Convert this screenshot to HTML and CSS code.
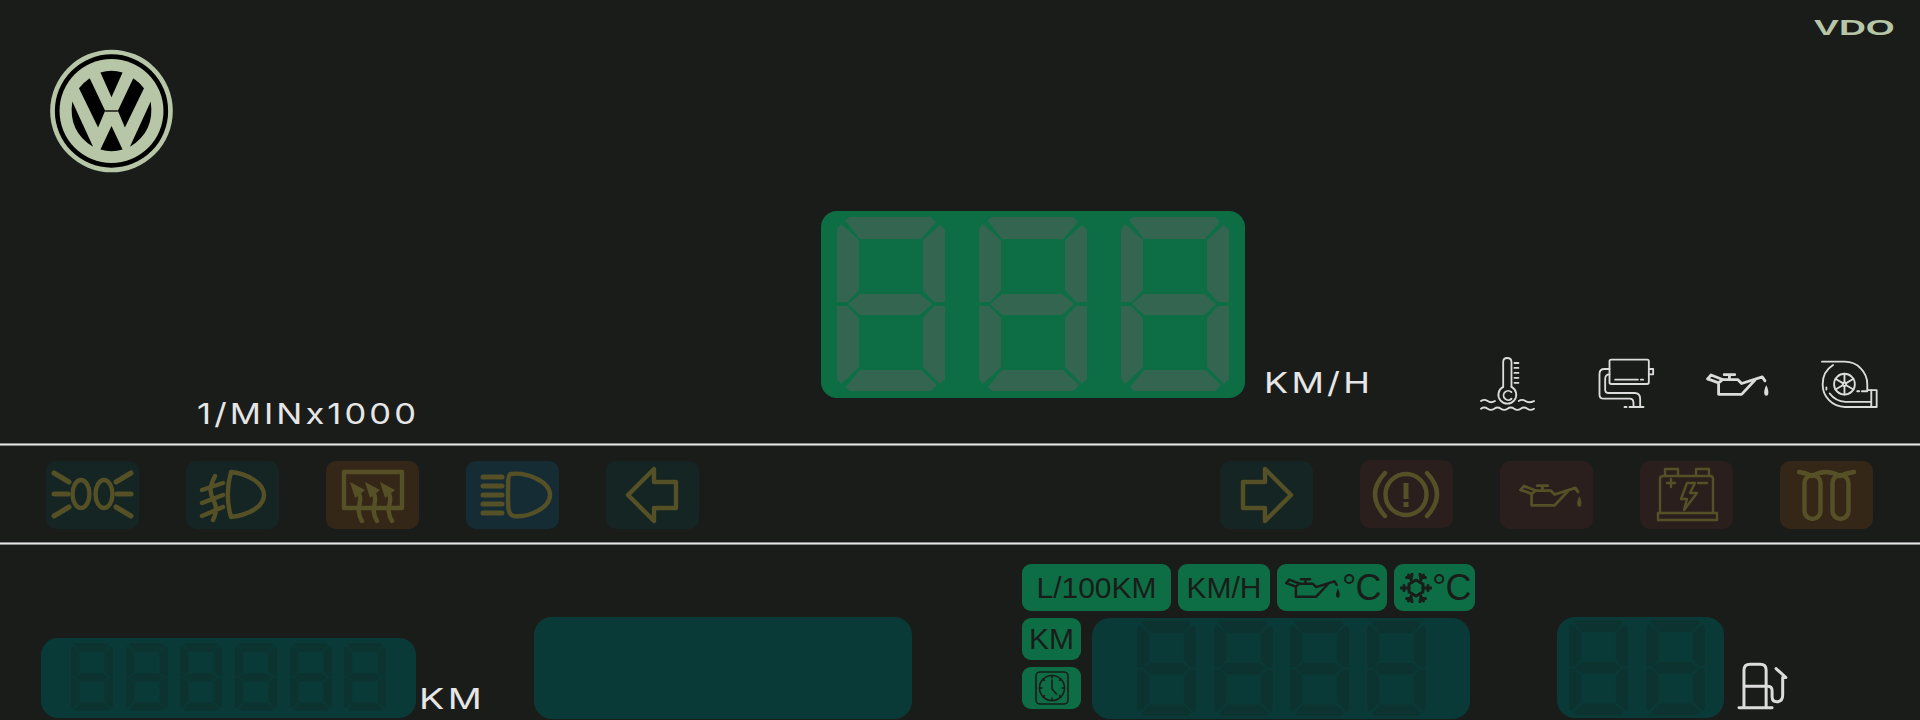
FILE: index.html
```html
<!DOCTYPE html>
<html lang="en">
<head>
<meta charset="utf-8">
<title>Instrument cluster</title>
<link rel="stylesheet" href="styles.css">
</head>
<body>
<svg class="defs" width="0" height="0" aria-hidden="true">
  <defs>
    <symbol id="digit" viewBox="0 0 108 174">
      <polygon points="8,3 13,0 94,0 99,5 84,22 23,22"/>
      <polygon points="0,12 4,7 22,23 22,73 11,85 0,85"/>
      <polygon points="86,23 103,8 108,13 108,85 97,85 86,73"/>
      <polygon points="11,87 23,77 83,77 95,87 83,98 23,98"/>
      <polygon points="0,89 10,89 22,101 22,150 4,167 0,162"/>
      <polygon points="86,101 97,89 108,89 108,162 103,167 86,150"/>
      <polygon points="9,170 23,153 84,153 100,168 94,174 13,174"/>
    </symbol>
    <symbol id="oil" viewBox="795 95 198 76">
      <path class="ln" d="M802,116 L812,104 L847,118 L893,118 L905,130 L968,110 L976,122"/>
      <path class="ln" d="M802,116 L835,128 L847,118 M835,128 L835,163 L905,163 L945,120"/>
      <path class="ln" d="M852,103 H884 M868,104 V116"/>
      <path class="fl" d="M980,135 C972,150 971,167 980,167 C989,167 988,150 980,135 Z"/>
    </symbol>
  </defs>
</svg>
<main class="cluster">
  <section class="top">
    <div class="top-left">
      <svg class="vw" viewBox="152 148 366 370">
        <circle class="vw-a" cx="335" cy="333" r="183"/>
        <circle class="vw-b" cx="335" cy="333" r="169"/>
        <circle class="vw-a" cx="335" cy="333" r="155"/>
        <path class="vw-b" d="M302,218 Q335,208 368,218 L335,292 Z"/>
        <path class="vw-b" d="M238,265 Q252,247 270,235 L316,332 L295,382 Z"/>
        <path class="vw-b" d="M432,265 Q418,247 400,235 L354,332 L375,382 Z"/>
        <path class="vw-b" d="M316,331 H354 V335 H316 Z"/>
        <path class="vw-b" d="M335,378 L368,448 Q335,458 302,448 Z"/>
        <path class="vw-b" d="M218,305 L280,440 Q205,395 218,305 Z"/>
        <path class="vw-b" d="M452,305 L390,440 Q465,395 452,305 Z"/>
      </svg>
      <div class="label rpm">1/MINx1000</div>
    </div>
    <div class="speed-block">
      <div class="panel-green">
        <svg class="d-big"><use href="#digit"/></svg>
        <svg class="d-big"><use href="#digit"/></svg>
        <svg class="d-big"><use href="#digit"/></svg>
      </div>
      <div class="label kmh">KM/H</div>
    </div>
    <div class="top-right">
      <div class="vdo"><span>VDO</span></div>
      <div class="gauges">
        <svg class="g-temp" viewBox="118 50 166 166">
          <path class="ln-w" d="M188,140 V65 Q188,53 200,53 Q213,53 213,65 V140"/>
          <path class="ln-w" d="M188,140 A27,27 0 1 0 213,140"/>
          <path class="ln-w" d="M213,156 A14,14 0 1 0 213,176"/>
          <path class="ln-w" d="M222,68 H234 M222,83 H234 M222,98 H234 M222,113 H234 M222,128 H234"/>
          <path class="ln-w" d="M121,183 Q131,176 141,183 T163,183 M235,183 Q245,176 255,183 T281,183"/>
          <path class="ln-w" d="M121,206 Q131,199 141,206 T161,206 T181,206 T201,206 T221,206 T241,206 T261,206 T281,206"/>
        </svg>
        <svg class="g-engine" viewBox="476 55 170 156">
          <rect class="ln-w" x="510" y="60" width="118" height="73" rx="5"/>
          <path class="ln-w" d="M628,88 H641 V104 H628"/>
          <path class="ln-w" d="M527,120 H595 M604,120 H611"/>
          <path class="ln-w" d="M510,88 H495 Q480,88 480,103 V165 Q480,177 493,177 H570 Q582,177 582,190 V202"/>
          <path class="ln-w" d="M510,104 Q497,104 497,118 V150 Q497,160 508,160 H585 Q602,160 602,178 V202"/>
          <path class="ln-w" d="M570,202 H612 M555,202 H561"/>
        </svg>
        <svg class="g-oil"><use class="white" href="#oil"/></svg>
        <svg class="g-turbo" viewBox="1142 60 170 146">
          <path class="ln-w" d="M1145,65 H1213 A67,67 0 0 1 1280,132 V150 H1308 V200 H1213 A67,67 0 0 1 1147,132 A67,67 0 0 1 1178,75"/>
          <path class="ln-w" d="M1168,160 Q1185,183 1215,185 H1292 M1292,150 V200 M1158,142 V148 M1250,153 H1256 M1264,153 H1280"/>
          <circle class="ln-w" cx="1212" cy="132" r="31"/>
          <circle class="ln-w" cx="1212" cy="132" r="5"/>
          <path class="ln-w" d="M1212,101 V127 M1212,137 V163 M1185,116 L1207,129 M1217,135 L1239,148 M1185,148 L1207,135 M1217,129 L1239,116"/>
        </svg>
      </div>
    </div>
  </section>
  <div class="rule"></div>
  <section class="lights">
    <div class="tile-group">
      <div class="tile teal"><svg class="ti" viewBox="0 0 93 68">
        <ellipse class="s3" cx="35" cy="33" rx="8.5" ry="14"/>
        <ellipse class="s3" cx="58" cy="33" rx="8.5" ry="14"/>
        <path class="s4" d="M8,12 L23,21 M8,33 H22 M8,55 L23,46 M85,12 L70,21 M85,33 H71 M85,55 L70,46"/>
      </svg></div>
      <div class="tile teal"><svg class="ti" viewBox="0 0 93 68">
        <path class="s3" d="M45,11 C62,13 78,22 78,34 C78,46 62,54 45,56 C41,42 41,25 45,11 Z"/>
        <path class="s3" d="M16,29 L37,22 M16,42 L37,34 M16,55 L37,46 M29,15 C24,25 23,30 27,38 C31,46 31,50 27,59"/>
      </svg></div>
      <div class="tile amber"><svg class="ti" viewBox="0 0 93 68">
        <rect class="s3" x="18" y="11" width="58" height="36"/>
        <path class="s3" d="M36,60 C31,52 33,46 34,40 C35,36 33,32 31,28 M51,60 C46,52 48,46 49,40 C50,36 48,32 46,28 M66,60 C61,52 63,46 64,40 C65,36 63,32 61,28"/>
        <path class="fl-i" d="M24,21 L39,29 L29,37 Z M39,21 L54,29 L44,37 Z M54,21 L69,29 L59,37 Z"/>
      </svg></div>
      <div class="tile blue"><svg class="ti" viewBox="0 0 93 68">
        <path class="s3" d="M45,13 C60,11 84,20 84,34 C84,47 62,57 48,55 C42,54 42,48 42,34 C42,20 42,13 45,13 Z"/>
        <path class="s4" d="M17,16 H36 M17,25 H36 M17,34 H36 M17,43 H36 M17,52 H36"/>
      </svg></div>
      <div class="tile teal"><svg class="ti" viewBox="0 0 93 68">
        <path class="s3" d="M22,34 L48,8 V21 H70 V47 H48 V60 Z"/>
      </svg></div>
    </div>
    <div class="tile-group">
      <div class="tile teal"><svg class="ti" viewBox="0 0 93 68">
        <path class="s3" d="M71,34 L45,8 V21 H23 V47 H45 V60 Z"/>
      </svg></div>
      <div class="tile red raised"><svg class="ti" viewBox="0 0 93 68">
        <circle class="s3" cx="46" cy="34.5" r="20.5"/>
        <path class="s5" d="M46,23 V39 M46,42 V47"/>
        <path class="s3" d="M25,13 Q5,34 25,56 M67,13 Q87,34 67,56"/>
      </svg></div>
      <div class="tile red"><svg class="ti ti-oil"><use class="dim" href="#oil"/></svg></div>
      <div class="tile red"><svg class="ti" viewBox="0 0 93 68">
        <rect class="s2" x="18" y="52" width="59" height="7"/>
        <path class="s2" d="M20,52 V18 Q20,15 23,15 H70 Q73,15 73,18 V52"/>
        <path class="s2" d="M25,15 V8 H38 V15 M56,15 V8 H69 V15"/>
        <path class="s2" d="M27,22 H35 M31,18 V26 M58,22 H67"/>
        <path class="s2" d="M47,22 H55 L50,32 H57 L44,49 L47,38 H41 Z"/>
      </svg></div>
      <div class="tile amber"><svg class="ti" viewBox="0 0 93 68">
        <rect class="s3" x="24.5" y="14" width="16" height="44" rx="8"/>
        <rect class="s3" x="52.5" y="14" width="16" height="44" rx="8"/>
        <path class="s3" d="M19,11 Q26,12 32,15 Q46,7 60,15 Q66,12 74,11"/>
      </svg></div>
    </div>
  </section>
  <div class="rule"></div>
  <section class="bottom">
    <div class="odo-group">
      <div class="panel-dark odo">
        <svg class="d-small"><use href="#digit"/></svg>
        <svg class="d-small"><use href="#digit"/></svg>
        <svg class="d-small"><use href="#digit"/></svg>
        <svg class="d-small"><use href="#digit"/></svg>
        <svg class="d-small"><use href="#digit"/></svg>
        <svg class="d-small"><use href="#digit"/></svg>
      </div>
      <div class="label km">KM</div>
    </div>
    <div class="panel-dark blank"></div>
    <div class="info">
      <div class="pill-row">
        <div class="pill p-l100">L/100KM</div>
        <div class="pill p-kmh">KM/H</div>
        <div class="pill p-oil"><svg class="pill-oil"><use class="darkuse" href="#oil"/></svg><span class="deg">°C</span></div>
        <div class="pill p-snow"><svg class="snow" viewBox="-16 -15 32 30">
          <g class="sn">
            <path d="M-7,-4 L0,-8 L7,-4 L7,4 L0,8 L-7,4 Z"/>
            <path d="M-15,0 H-7 M-12,-2.5 V2.5 M15,0 H7 M12,-2.5 V2.5"/>
            <path d="M-7.5,-13 L-3.5,-6 M-9.5,-10.5 L-5.5,-10.5 M-4,-14 L-5,-9"/>
            <path d="M7.5,-13 L3.5,-6 M9.5,-10.5 L5.5,-10.5 M4,-14 L5,-9"/>
            <path d="M-7.5,13 L-3.5,6 M-9.5,10.5 L-5.5,10.5 M-4,14 L-5,9"/>
            <path d="M7.5,13 L3.5,6 M9.5,10.5 L5.5,10.5 M4,14 L5,9"/>
          </g>
        </svg><span class="deg">°C</span></div>
      </div>
      <div class="info-row">
        <div class="mini-col">
          <div class="pill p-mini">KM</div>
          <div class="pill p-mini"><svg class="clock" viewBox="0 0 34 34">
            <rect x="1" y="1" width="32" height="32" rx="4"/>
            <circle cx="17" cy="17" r="12.5"/>
            <path d="M17,4.5 V7 M17,27 V29.5 M4.5,17 H7 M27,17 H29.5 M8,8 L9.5,9.5 M26,8 L24.5,9.5 M8,26 L9.5,24.5 M26,26 L24.5,24.5"/>
            <path d="M17,9 V18 L21.5,23"/>
          </svg></div>
        </div>
        <div class="panel-dark clock-panel">
          <svg class="d-mid"><use href="#digit"/></svg>
          <svg class="d-mid"><use href="#digit"/></svg>
          <svg class="d-mid"><use href="#digit"/></svg>
          <svg class="d-mid"><use href="#digit"/></svg>
        </div>
      </div>
    </div>
    <div class="panel-dark fuel">
      <svg class="d-mid"><use href="#digit"/></svg>
      <svg class="d-mid"><use href="#digit"/></svg>
    </div>
    <svg class="pump" viewBox="710 185 155 145">
      <path d="M718,323 H818 M733,320 V210 Q733,192 752,192 H782 Q800,192 800,210 V320 M733,258 H800"/>
      <path d="M805,258 Q818,258 818,272 V290 Q818,305 832,305 Q850,305 850,285 V232 L860,232 L830,205"/>
    </svg>
  </section>
</main>
</body>
</html>
```
FILE: styles.css
```css
* { box-sizing: border-box; }
html, body { margin: 0; padding: 0; }
body {
  width: 1920px;
  height: 720px;
  overflow: hidden;
  background: #1a1c1a;
  font-family: "Liberation Sans", Arial, sans-serif;
}
.defs { position: absolute; }
.cluster { display: flex; flex-direction: column; height: 720px; }

/* shared line styles for icons */
.ln, .ln-w { fill: none; stroke-linecap: round; stroke-linejoin: round; }
.ln { stroke: inherit; stroke-width: 8.5; }
.ln-w { stroke: #dcdcdc; stroke-width: 5.5; }
.fl { fill: inherit; stroke: none; }
.white { stroke: #dcdcdc; fill: #dcdcdc; }
.dim { stroke: #565026; fill: #565026; }
.darkuse { stroke: #1a1c1a; fill: #1a1c1a; }

.label {
  font-family: Inter, "Liberation Sans", sans-serif;
  font-weight: 400;
  color: #e6e6e6;
  line-height: 1;
  white-space: nowrap;
  transform-origin: left center;
}

/* top */
.top { display: flex; height: 443px; }
.top-left {
  width: 821px;
  display: flex;
  flex-direction: column;
  justify-content: space-between;
  padding: 49px 0 15px 50px;
}
.vw { width: 123px; height: 124px; display: block; }
.vw-a { fill: #b7c6a6; }
.vw-b { fill: #000; }
.rpm { font-size: 29px; letter-spacing: 2.6px; margin-left: 147px; transform: scaleX(1.19); }

.speed-block { width: 659px; display: flex; align-items: flex-end; padding-top: 211px; height: 398px; }
.panel-green {
  width: 424px;
  height: 187px;
  background: #0d6e45;
  border-radius: 16px;
  display: flex;
  gap: 34px;
  padding: 6px 16px 7px;
  fill: #346551;
}
.d-big { width: 108px; height: 174px; display: block; }
.kmh { font-size: 29px; letter-spacing: 2.6px; margin-left: 19px; margin-bottom: 1px; transform: scaleX(1.24); }

.top-right { flex: 1; display: flex; flex-direction: column; }
.vdo {
  display: flex;
  justify-content: flex-end;
  padding: 16px 25px 0 0;
  height: 357px;
  color: #b7c6a6;
  font-weight: 700;
  font-size: 22px;
  line-height: 24px;
}
.vdo span { display: block; transform: scaleX(1.69); transform-origin: right center; }
.gauges { display: flex; align-items: center; height: 54px; }
.g-temp { width: 55px; height: 55px; }
.g-engine { width: 57px; height: 52px; margin-left: 63px; }
.g-oil { width: 66px; height: 25px; margin-left: 50px; }
.g-turbo { width: 57px; height: 49px; margin-left: 50px; }

.rule {
  height: 3px;
  flex: none;
  background: linear-gradient(#8d8d8d 0 1px, #e6e6e6 1px 2px, #8d8d8d 2px);
}

/* warning lights */
.lights {
  height: 96px;
  flex: none;
  display: flex;
  justify-content: space-between;
  padding: 15px 47px 0 46px;
}
.tile-group { display: flex; gap: 47px; align-items: flex-start; }
.tile { width: 93px; height: 68px; border-radius: 10px; display: flex; align-items: center; justify-content: center; }
.raised { margin-top: -1px; }
.teal { background: #152523; }
.amber { background: #352718; }
.blue { background: #152c35; }
.red { background: #2b1f1e; }
.ti { width: 93px; height: 68px; display: block; }
.ti-oil { width: 66px; height: 25px; margin-left: 8px; }
.s2, .s3, .s4 { fill: none; stroke: #565026; stroke-linecap: round; stroke-linejoin: round; }
.s2 { stroke-width: 2.4; }
.s3 { stroke-width: 4.4; }
.s4 { stroke-width: 5; }
.s5 { fill: none; stroke: #565026; stroke-width: 5; }
.fl-i { fill: #565026; }

/* bottom */
.bottom { display: flex; align-items: flex-start; flex: 1; min-height: 0; }
.odo-group { width: 534px; padding: 93px 0 0 41px; display: flex; align-items: flex-end; }
.panel-dark { background: #0a3a38; border-radius: 18px; display: flex; fill: #0d3331; }
.odo { width: 375px; height: 80px; padding: 5px 0 0 30px; gap: 12.7px; border-radius: 17px; }
.d-small { width: 42px; height: 68px; display: block; flex: none; }
.km { font-size: 29px; letter-spacing: 2.6px; margin-left: 3px; margin-bottom: 5px; transform: scaleX(1.3); }
.blank { width: 378px; height: 102px; margin-top: 72px; }

.info { width: 453px; margin: 19px 0 0 110px; display: flex; flex-direction: column; gap: 7px; }
.pill-row { display: flex; gap: 7px; }
.pill {
  height: 47px;
  background: #0d6e45;
  border-radius: 9px;
  color: #1a1c1a;
  font-size: 30px;
  display: flex;
  align-items: center;
  justify-content: center;
  flex: none;
}
.p-l100 { width: 149px; }
.p-kmh { width: 92px; }
.p-oil { width: 110px; justify-content: flex-start; padding-left: 7px; gap: 0; }
.p-snow { width: 81px; justify-content: flex-start; padding-left: 6px; gap: 0; }
.pill-oil { width: 58px; height: 22px; stroke: #1a1c1a; }
.deg { font-size: 36px; line-height: 47px; letter-spacing: -1px; }
.snow { width: 32px; height: 30px; }
.sn { fill: none; stroke: #1a1c1a; stroke-width: 3; stroke-linecap: round; stroke-linejoin: round; }
.info-row { display: flex; gap: 11px; align-items: flex-start; }
.mini-col { width: 59px; display: flex; flex-direction: column; gap: 7px; }
.p-mini { width: 59px; height: 42px; }
.clock { width: 34px; height: 34px; fill: none; stroke: #1a1c1a; stroke-width: 1.6; stroke-linecap: round; }
.clock-panel { width: 378px; height: 101px; padding: 3px 0 0 45px; gap: 17.7px; }
.d-mid { width: 59px; height: 95px; display: block; flex: none; }
.fuel { width: 167px; height: 101px; margin: 72px 0 0 82px; padding: 3px 0 0 12px; gap: 18px; }
.pump {
  width: 52px;
  height: 48px;
  margin: 117px 0 0 12px;
  fill: none;
  stroke: #dcdcdc;
  stroke-width: 9;
  stroke-linecap: round;
  stroke-linejoin: round;
}
```
